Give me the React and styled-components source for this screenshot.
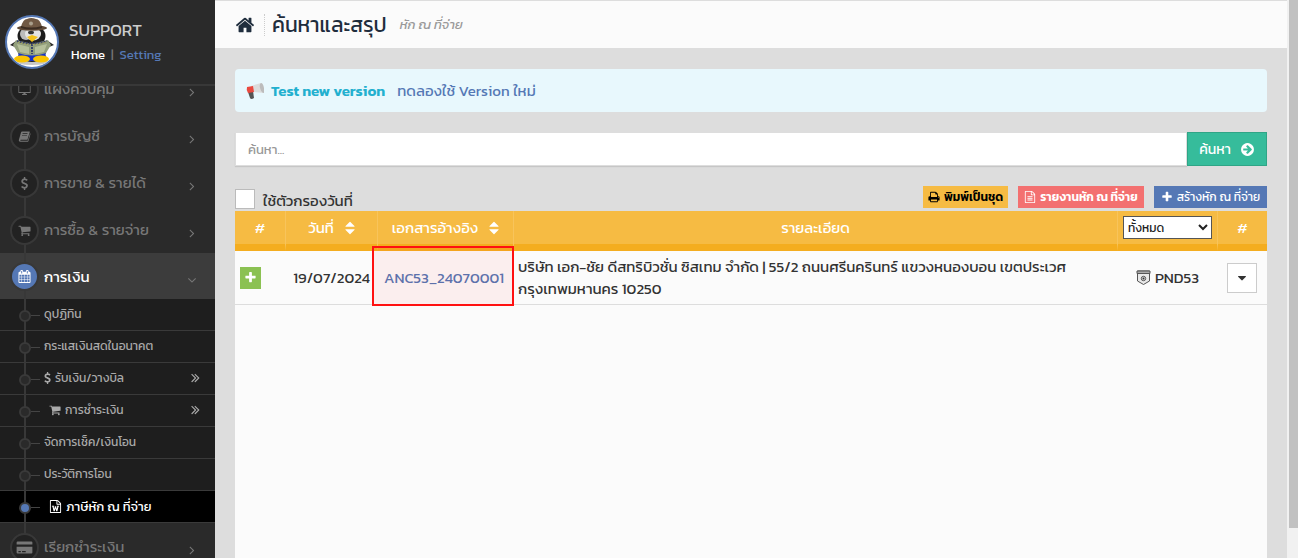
import React, { useState } from 'react'
import styled, { createGlobalStyle, css } from 'styled-components'

const GlobalStyle = createGlobalStyle`
  *, *::before, *::after {
    box-sizing: border-box;
  }
  body {
    margin: 0;
    overflow: hidden;
    background: #ddd;
    color: #333;
    font-family: Kanit, Prompt, "Noto Sans Thai", "Noto Sans", sans-serif;
    font-size: 15px;
    line-height: 22px;
  }
  button, input, select {
    font-family: inherit;
  }
  a {
    color: inherit;
    text-decoration: none;
  }
`

const ICONS = {
  home: 'M1472 992v480q0 26-19 45t-45 19h-384v-384h-256v384h-384q-26 0-45-19t-19-45v-480q0-1 .5-3t.5-3l575-474 575 474q1 2 1 6zm223-69l-62 74q-8 9-21 11h-3q-13 0-21-7l-692-577-692 577q-12 8-24 7-13-2-21-11l-62-74q-8-10-7-23.500t11-21.500l719-599q32-26 76-26t76 26l244 204v-195q0-14 9-23t23-9h192q14 0 23 9t9 23v408l219 182q10 8 11 21.500t-7 23.500z',
  plus: 'M1600 736v192q0 40-28 68t-68 28h-416v416q0 40-28 68t-68 28h-192q-40 0-68-28t-28-68v-416h-416q-40 0-68-28t-28-68v-192q0-40 28-68t68-28h416v-416q0-40 28-68t68-28h192q40 0 68 28t28 68v416h416q40 0 68 28t28 68z',
  right: 'M1171 960q0 13-10 23l-466 466q-10 10-23 10t-23-10l-50-50q-10-10-10-23t10-23l393-393-393-393q-10-10-10-23t10-23l50-50q10-10 23-10t23 10l466 466q10 10 10 23z',
  down: 'M1395 736q0 13-10 23l-466 466q-10 10-23 10t-23-10l-466-466q-10-10-10-23t10-23l50-50q10-10 23-10t23 10l393 393 393-393q10-10 23-10t23 10l50 50q10 10 10 23z',
  doubleRight: 'M979 960q0 13-10 23l-466 466q-10 10-23 10t-23-10l-50-50q-10-10-10-23t10-23l393-393-393-393q-10-10-10-23t10-23l50-50q10-10 23-10t23 10l466 466q10 10 10 23zm384 0q0 13-10 23l-466 466q-10 10-23 10t-23-10l-50-50q-10-10-10-23t10-23l393-393-393-393q-10-10-10-23t10-23l50-50q10-10 23-10t23 10l466 466q10 10 10 23z',
  cart: 'M704 1536q0 52-38 90t-90 38-90-38-38-90 38-90 90-38 90 38 38 90zm896 0q0 52-38 90t-90 38-90-38-38-90 38-90 90-38 90 38 38 90zm128-1088v512q0 24-16.500 42.500t-40.500 21.500l-1044 122q13 60 13 70 0 16-24 64h920q26 0 45 19t19 45-19 45-45 19h-1024q-26 0-45-19t-19-45q0-11 8-31.500t16-36 21.500-40 15.500-29.500l-177-823h-204q-26 0-45-19t-19-45 19-45 45-19h256q16 0 28.500 6.500t19.500 15.500 13 24.500 8 26 5.500 29.500 4.500 26h1201q26 0 45 19t19 45z',
  sort: 'M1408 1088q0 26-19 45l-448 448q-19 19-45 19t-45-19l-448-448q-19-19-19-45t19-45 45-19h896q26 0 45 19t19 45zm0-384q0 26-19 45t-45 19h-896q-26 0-45-19t-19-45 19-45l448-448q19-19 45-19t45 19l448 448q19 19 19 45z',
  caret: 'M1408 704q0 26-19 45l-448 448q-19 19-45 19t-45-19l-448-448q-19-19-19-45t19-45 45-19h896q26 0 45 19t19 45z',
  file: 'M1596 380q28 28 48 76t20 88v1152q0 40-28 68t-68 28h-1344q-40 0-68-28t-28-68v-1600q0-40 28-68t68-28h896q40 0 88 20t76 48zm-444-244v376h376q-10-29-22-41l-313-313q-12-12-41-22zm384 1528v-1024h-416q-40 0-68-28t-28-68v-416h-768v1536h1280zm-1024-864q0-14 9-23t23-9h704q14 0 23 9t9 23v64q0 14-9 23t-23 9h-704q-14 0-23-9t-9-23v-64zm736 224q14 0 23 9t9 23v64q0 14-9 23t-23 9h-704q-14 0-23-9t-9-23v-64q0-14 9-23t23-9h704zm0 256q14 0 23 9t9 23v64q0 14-9 23t-23 9h-704q-14 0-23-9t-9-23v-64q0-14 9-23t23-9h704z',
  word: 'M1596 380q28 28 48 76t20 88v1152q0 40-28 68t-68 28h-1344q-40 0-68-28t-28-68v-1600q0-40 28-68t68-28h896q40 0 88 20t76 48zm-444-244v376h376q-10-29-22-41l-313-313q-12-12-41-22zm384 1528v-1024h-416q-40 0-68-28t-28-68v-416h-768v1536h1280zM400 780h320v120h-75l70 350 110-400h140l110 400 70-350h-75v-120h320v120h-70l-165 640h-150l-110-380-110 380h-150l-165-640h-70z',
  print: 'M448 1536h896v-256h-896v256zm0-640h896v-384h-160q-40 0-68-28t-28-68v-160h-640v640zm1152 64q0-26-19-45t-45-19-45 19-19 45 19 45 45 19 45-19 19-45zm128 0v416q0 13-9.500 22.500t-22.500 9.500h-224v160q0 40-28 68t-68 28h-960q-40 0-68-28t-28-68v-160h-224q-13 0-22.500-9.500t-9.500-22.500v-416q0-79 56.500-135.500t135.500-56.500h64v-544q0-40 28-68t68-28h672q40 0 88 20t76 48l152 152q28 28 48 76t20 88v256h64q79 0 135.500 56.500t56.500 135.500z',
  calendar: 'M192 1664h288v-288h-288v288zm352 0h320v-288h-320v288zm-352-352h288v-320h-288v320zm352 0h320v-320h-320v320zm-352-384h288v-288h-288v288zm736 736h320v-288h-320v288zm-384-736h320v-288h-320v288zm768 736h288v-288h-288v288zm-384-352h320v-320h-320v320zm-352-864v-288q0-13-9.500-22.500t-22.500-9.500h-64q-13 0-22.500 9.500t-9.500 22.500v288q0 13 9.500 22.500t22.500 9.500h64q13 0 22.500-9.500t9.500-22.500zm736 864h288v-320h-288v320zm-384-384h320v-288h-320v288zm384 0h288v-288h-288v288zm32-480v-288q0-13-9.500-22.500t-22.500-9.500h-64q-13 0-22.500 9.500t-9.500 22.500v288q0 13 9.500 22.500t22.500 9.500h64q13 0 22.500-9.500t9.500-22.500zm384-64v1280q0 52-38 90t-90 38h-1408q-52 0-90-38t-38-90v-1280q0-52 38-90t90-38h128v-96q0-66 47-113t113-47h64q66 0 113 47t47 113v96h384v-96q0-66 47-113t113-47h64q66 0 113 47t47 113v96h128q52 0 90 38t38 90z',
  arrowCircle: 'M1413 896q0-27-18-45l-91-91-362-362q-18-18-45-18t-45 18l-91 91q-18 18-18 45t18 45l189 189h-502q-26 0-45 19t-19 45v128q0 26 19 45t45 19h502l-189 189q-19 19-19 45t19 45l91 91q18 18 45 18t45-18l362-362 91-91q18-18 18-45zm251 0q0 209-103 385.500t-279.500 279.500-385.500 103-385.500-103-279.500-279.500-103-385.500 103-385.500 279.500-279.500 385.500-103 385.500 103 279.500 279.500 103 385.500z',
  desktop: 'M96 256h1600q32 0 32 32v1050q0 32-32 32h-672l40 150h160v120h-656v-120h160l40-150h-672q-32 0-32-32v-1050q0-32 32-32zm64 120v870h1472v-870z',
  book: 'M560 190h1000q90 0 65 90l-300 1010q-20 70-90 70h-860q-60 0-80 55 0 65 110 65h890q60 0 80-55l290-960q75 40 50 120l-290 960q-25 75-110 75h-990q-180 0-215-165-10-60 15-120l290-990q30-130 145-155zm80 260l-25 85h680l25-85zm-75 240l-25 85h680l25-85z',
  card: 'M176 256h1440q112 0 112 112v220h-1664v-220q0-112 112-112zm-112 560h1664v608q0 112-112 112h-1440q-112 0-112-112v-608zm190 440v128h256v-128zm384 0v128h384v-128z',
  dollar: 'M1362 1185q0 153-99.500 263.500t-258.500 136.500v175q0 14-9 23t-23 9h-135q-13 0-22.500-9.500t-9.500-22.500v-175q-66-9-127.500-31t-101.500-44.500-74-48-46.500-37.500-17.500-18q-17-21-2-41l103-135q7-10 23-12 15-2 24 9l2 2q113 99 243 125 37 8 74 8 81 0 142.500-43t61.500-122q0-28-15-53t-33.500-42-58.500-37.500-66-32-80-32.500q-39-16-61.500-25t-61.500-26.500-62.500-31-56.500-35.500-53.500-42.500-43.500-49-35.500-58-21-66.500-8.500-78q0-138 98-242t255-134v-180q0-13 9.500-22.500t22.500-9.500h135q14 0 23 9t9 23v176q57 6 110.500 23t87 33.500 63.500 37.500 39 29 15 14q17 18 5 38l-81 146q-8 15-23 16-14 3-27-7-3-3-14.500-12t-39-26.500-58.500-32-74.500-26-85.500-11.500q-95 0-155 43t-60 111q0 26 8.500 48t29.500 41.500 39.500 33 56 31 60.500 27 70 27.500q53 20 81 31.500t76 35 75.500 42.500 62 50 53 63.500 31.500 76.500 13 94z',
}

const EVEN_ODD = ['desktop', 'book', 'card']

const Svg = styled.svg`
  flex: none;
  display: block;
  fill: currentColor;
`

// narrow glyphs are cropped to the middle of the grid
const Icon = ({ name, size = 14, narrow }) => (
  <Svg
    width={narrow ? Math.round(size * 0.57) : size}
    height={size}
    viewBox={narrow ? '384 0 1024 1792' : '0 0 1792 1792'}
    aria-hidden="true"
  >
    <path d={ICONS[name]} fillRule={EVEN_ODD.includes(name) ? 'evenodd' : 'nonzero'} />
  </Svg>
)

const Layout = styled.div`
  display: flex;
  height: 100vh;
`

const Sidebar = styled.aside`
  flex: none;
  display: flex;
  flex-direction: column;
  width: 215px;
  background: #2a2a2a;
  overflow: hidden;
`

const Profile = styled.div`
  flex: none;
  display: flex;
  align-items: center;
  gap: 10px;
  height: 86px;
  padding: 0 5px;
  border-bottom: 2px solid #383838;
`

const Avatar = styled.svg`
  flex: none;
  width: 54px;
  height: 54px;
  border: 2px solid #5578b5;
  border-radius: 50%;
  background: #fff;
`

const UserName = styled.div`
  color: #ccc;
  font-size: 17px;
  line-height: 26px;
`

const UserLinks = styled.div`
  display: flex;
  gap: 6px;
  padding-left: 2px;
  color: #777;
  font-size: 13px;
  line-height: 24px;
`

const UserLink = styled.a`
  color: ${({ $accent }) => ($accent ? '#5578b5' : '#fff')};
`

const Nav = styled.nav`
  flex: 1;
  min-height: 0;
  overflow: hidden;
`

const Menu = styled.ul`
  list-style: none;
  margin: 0;
  padding: 0;
`

// the list is scrolled down by half an item
const ScrolledMenu = styled(Menu)`
  margin-top: -21px;
`

const MenuItem = styled.li`
  position: relative;
  &::before {
    content: '';
    position: absolute;
    left: 24px;
    top: 0;
    bottom: 0;
    width: 2px;
    background: #383838;
  }
`

const MenuLink = styled.a`
  display: flex;
  align-items: center;
  gap: 5px;
  height: ${({ $active }) => ($active ? 46 : 47)}px;
  padding: 1px 16px 0 10px;
  color: ${({ $active }) => ($active ? '#fff' : '#777')};
  background: ${({ $active }) => ($active ? '#3c3c3c' : 'transparent')};
`

const Bullet = styled.span`
  position: relative;
  flex: none;
  display: flex;
  align-items: center;
  justify-content: center;
  width: 29px;
  height: 29px;
  border: 2px solid #383838;
  border-radius: 50%;
  background: ${({ $active }) => ($active ? '#5578b5' : '#222')};
`

const MenuLabel = styled.span`
  flex: 1;
  white-space: nowrap;
`

const Chevron = styled.span`
  padding-top: 6px;
  color: #777;
`

const SubLink = styled.a`
  position: relative;
  display: flex;
  align-items: center;
  gap: 4px;
  height: 32px;
  padding: 0 12px 2px ${({ $indent }) => ($indent ? 49 : 44)}px;
  border-bottom: 1px solid #3a3a3a;
  background: #1e1e1e;
  color: #aaa;
  font-size: 12px;
  &::before {
    content: '';
    position: absolute;
    left: 31px;
    top: 16px;
    width: 9px;
    height: 1px;
    background: #444;
  }
  ${({ $active }) => $active && css`
    padding-bottom: 0;
    background: #000;
    color: #fff;
    font-size: 13px;
  `}
`

const Dot = styled.span`
  position: absolute;
  left: 19px;
  top: 11px;
  width: 12px;
  height: 12px;
  border: 2px solid #3a3a3a;
  border-radius: 50%;
  background: ${({ $active }) => ($active ? '#5578b5' : '#2a2a2a')};
`

const SubItem = styled(MenuItem)`
  &::before {
    z-index: 1;
  }
  ${Dot} {
    z-index: 2;
  }
`

const Main = styled.main`
  flex: 1;
  min-width: 0;
  display: flex;
  flex-direction: column;
  border-top: 1px solid #ddd;
`

const PageHeader = styled.header`
  flex: none;
  display: flex;
  align-items: center;
  height: 47px;
  padding: 0 20px;
  background: #fbfbfb;
  color: #1f2d3d;
`

const PageTitle = styled.h1`
  margin: 0 13px 0 9px;
  padding-left: 7px;
  border-left: 1px dotted #ccc;
  font-size: 21px;
  font-weight: 400;
  line-height: 22px;
`

const Subtitle = styled.em`
  color: #999;
  font-size: 13px;
`

const Content = styled.div`
  flex: 1;
  min-height: 0;
  display: flex;
  flex-direction: column;
  padding: 21px 20px 0;
`

const Notice = styled.div`
  flex: none;
  display: flex;
  align-items: center;
  height: 43px;
  padding: 1px 11px 0;
  border-radius: 4px;
  background: #e8f8fd;
  color: #5578b5;
`

const NoticeTitle = styled.strong`
  margin: 0 12px 0 7px;
  color: #23b0cf;
  font-weight: 600;
`

const SearchForm = styled.form`
  flex: none;
  display: flex;
  height: 34px;
  margin: 20px 0;
`

const SearchInput = styled.input`
  flex: 1;
  min-width: 0;
  padding: 0 12px;
  border: 1px solid #ddd;
  background: #fff;
  box-shadow: 0 1px 1px rgba(0, 0, 0, 0.1);
  color: #333;
  font-size: 13px;
  &::placeholder {
    color: #999;
  }
`

const SearchButton = styled.button`
  display: flex;
  align-items: center;
  justify-content: center;
  gap: 9px;
  width: 80px;
  border: 1px solid #2fa586;
  background: #36bc9b;
  color: #fff;
  font-size: 14px;
`

const Toolbar = styled.div`
  flex: none;
  display: flex;
  justify-content: space-between;
  height: 25px;
`

const CheckLabel = styled.label`
  display: flex;
  gap: 8px;
  padding-top: 3px;
  line-height: 24px;
`

const CheckBox = styled.input`
  appearance: none;
  width: 20px;
  height: 20px;
  margin: 0;
  border: 1px solid #bbb;
  background: #fff;
  &:checked {
    background: #5578b5;
  }
`

const Actions = styled.div`
  display: flex;
  gap: 10px;
`

const ActionButton = styled.button`
  display: flex;
  align-items: center;
  justify-content: center;
  gap: 4px;
  min-width: ${({ $width }) => $width}px;
  height: 22px;
  padding: 0 4px;
  border: 0;
  background: ${({ $bg }) => $bg};
  color: ${({ $color }) => $color || '#fff'};
  font-size: 12px;
  font-weight: ${({ $bold }) => ($bold ? 600 : 400)};
  white-space: nowrap;
`

const Panel = styled.section`
  position: relative;
  flex: 1;
  background: #fbfbfb;
`

const Table = styled.table`
  width: 100%;
  border-collapse: separate;
  border-spacing: 0;
  table-layout: fixed;
`

const Th = styled.th`
  width: ${({ $width }) => ($width ? `${$width}px` : 'auto')};
  height: 40px;
  padding: 0;
  border-bottom: 7px solid #f4ad1f;
  border-right: 1px solid #f8c45b;
  background: #f6bb43;
  color: #fff;
  font-weight: 400;
  white-space: nowrap;
  &:last-child {
    border-right: 0;
  }
`

const SortButton = styled.button`
  display: inline-flex;
  align-items: center;
  gap: 8px;
  padding: 0 0 0 3px;
  border: 0;
  background: none;
  color: inherit;
  font-size: 15px;
`

const TypeSelect = styled.select`
  width: 89px;
  height: 23px;
  padding: 0;
  border: 1px solid #555;
  border-radius: 0;
  background: #fff;
  color: #222;
  font-size: 12px;
`

const Td = styled.td`
  position: relative;
  height: 54px;
  padding: 0 5px 0 4px;
  border-bottom: 1px solid #ddd;
  text-align: ${({ $align }) => $align || 'left'};
`

const ExpandCell = styled(Td)`
  padding-left: 5px;
`

const DateCell = styled(Td)`
  padding: 0 8px 0 0;
  white-space: nowrap;
`

const RefCell = styled(Td)`
  padding: 0 8px 0 4px;
`

const RefLink = styled.a`
  color: #5578b5;
`

// marks the document reference the reader has to click
const Highlight = styled.span`
  position: absolute;
  top: -5px;
  right: 0;
  bottom: -2px;
  left: -6px;
  border: 2px solid #f11;
  background: rgba(255, 0, 0, 0.05);
  pointer-events: none;
`

const ExpandButton = styled.button`
  display: flex;
  align-items: center;
  justify-content: center;
  width: 21px;
  height: 22px;
  padding: 0;
  border: 0;
  background: #8bc152;
  color: #fff;
`

const TypeTag = styled.span`
  display: inline-flex;
  align-items: center;
  gap: 4px;
  vertical-align: middle;
`

const MenuButton = styled.button`
  display: inline-flex;
  align-items: center;
  justify-content: center;
  width: 30px;
  height: 30px;
  padding: 0;
  border: 1px solid #ccc;
  background: #fff;
  color: #333;
  vertical-align: middle;
`

const ScrollTrack = styled.div`
  flex: none;
  width: 11px;
  padding-left: 2px;
  background: #f1f1f1;
`

const ScrollThumb = styled.div`
  height: 528px;
  background: #c1c1c1;
`

const topItems = [
  { label: 'แผงควบคุม', icon: 'desktop' },
  { label: 'การบัญชี', icon: 'book' },
  { label: 'การขาย & รายได้', icon: 'dollar' },
  { label: 'การซื้อ & รายจ่าย', icon: 'cart' },
  {
    label: 'การเงิน',
    icon: 'calendar',
    active: true,
    children: [
      { label: 'ดูปฏิทิน' },
      { label: 'กระแสเงินสดในอนาคต' },
      { label: 'รับเงิน/วางบิล', icon: 'dollar', more: true },
      { label: 'การชำระเงิน', icon: 'cart', indent: true, more: true },
      { label: 'จัดการเช็ค/เงินโอน' },
      { label: 'ประวัติการโอน' },
      { label: 'ภาษีหัก ณ ที่จ่าย', icon: 'word', indent: true, active: true },
    ],
  },
  { label: 'เรียกชำระเงิน', icon: 'card' },
]

const Penguin = () => (
  <Avatar viewBox="0 0 50 50" role="img" aria-label="SUPPORT">
    <ellipse cx="25" cy="45" rx="18" ry="3" fill="#c8c8c8" />
    <ellipse cx="24.500" cy="19" rx="14" ry="11" fill="#1c1c1c" />
    <path d="M9 24L3 28l5 2zM41 24l6 4-5 2z" fill="#282828" />
    <ellipse cx="25" cy="32" rx="14.500" ry="13" fill="#222" />
    <ellipse cx="19" cy="17" rx="6" ry="6" fill="#bbb" />
    <ellipse cx="26" cy="17" rx="8" ry="6.500" fill="#e4e4e4" />
    <path d="M12 35q13 6 26 0l2 9H10z" fill="#1735c8" />
    <path d="M9 23l16 4 16-4 3 5-5 8q-14 5-28 0l-5-8z" fill="#93a07c" />
    <path d="M10 27l12 3v7l-9-2zM28 30l12-3-3 8-9 2z" fill="#b5c09a" />
    <path d="M10 24q15 5 30 0M25 27v10" fill="none" stroke="#39456b" strokeWidth="2" strokeDasharray="2 1" />
    <path d="M11 25q14 5 28 0" fill="none" stroke="#dbc744" strokeWidth="1" strokeDasharray="1 2" />
    <path d="M20 20l5-2 6 2-6 5z" fill="#f4c21b" />
    <ellipse cx="24" cy="15.500" rx="3" ry="1.800" fill="#333" />
    <ellipse cx="25" cy="11" rx="15" ry="2.800" fill="#5e4937" />
    <path d="M14 10q2-8 6-8 4-2 9 0 4 0 6 8-10 3-21 0z" fill="#705944" />
    <path d="M14 9q10 3 21 0v2q-11 3-21 0z" fill="#3c2d22" />
    <circle cx="24" cy="6.500" r="2" fill="#aaa08c" />
    <ellipse cx="15" cy="42" rx="8" ry="3.500" fill="#fac400" />
    <ellipse cx="34" cy="42" rx="8" ry="3.500" fill="#fac400" />
  </Avatar>
)

const Megaphone = () => (
  <Svg width="18" height="18" viewBox="0 0 18 18" aria-hidden="true">
    <path d="M2 10l5-1 1 7q-3 2-4 0z" fill="#555" />
    <path d="M5 4l10-3 3 10-11-1z" fill="#dcdcdc" />
    <path d="M15 1q2 0 3 5t-1 5q-2-1-3-5t1-5z" fill="#bcbcbc" />
    <path d="M1 5l6-1 1 6-6 1q-2-3-1-6z" fill="#e9493f" />
  </Svg>
)

const Shield = () => (
  <Svg width="15" height="16" viewBox="0 0 15 16" aria-hidden="true">
    <path d="M1.500 1v10l6 3.500 6-3.500V1z" fill="#e8e8e8" stroke="#555" />
    <path d="M1 1h13v2.500H1z" fill="#aaa" stroke="#555" />
    <circle cx="7.500" cy="8.500" r="2.200" fill="#ddd" stroke="#555" />
    <circle cx="7.500" cy="8.500" r="1" fill="#333" />
  </Svg>
)

const SideMenu = () => (
  <Nav>
    <ScrolledMenu>
      {topItems.map(({ label, icon, active, children }) => (
        <MenuItem key={label}>
          <MenuLink href="#" $active={active}>
            <Bullet $active={active}>
              <Icon name={icon} size={icon === 'card' ? 17 : 13} />
            </Bullet>
            <MenuLabel>{label}</MenuLabel>
            <Chevron><Icon name={active ? 'down' : 'right'} /></Chevron>
          </MenuLink>
          {children && (
            <Menu>
              {children.map(sub => (
                <SubItem key={sub.label}>
                  <SubLink href="#" $active={sub.active} $indent={sub.indent}>
                    <Dot $active={sub.active} />
                    {sub.icon && (
                      <Icon name={sub.icon} size={sub.active ? 13 : 12} narrow={sub.icon === 'dollar'} />
                    )}
                    <MenuLabel>{sub.label}</MenuLabel>
                    {sub.more && <Icon name="doubleRight" size={15} />}
                  </SubLink>
                </SubItem>
              ))}
            </Menu>
          )}
        </MenuItem>
      ))}
    </ScrolledMenu>
  </Nav>
)

const DocumentTable = () => (
  <Table>
    <thead>
      <tr>
        <Th $width={51}>#</Th>
        <Th $width={92}><SortButton type="button">วันที่ <Icon name="sort" size={16} /></SortButton></Th>
        <Th $width={136}><SortButton type="button">เอกสารอ้างอิง <Icon name="sort" size={16} /></SortButton></Th>
        <Th>รายละเอียด</Th>
        <Th $width={100}>
          <TypeSelect aria-label="ประเภท" defaultValue="all">
            <option value="all">ทั้งหมด</option>
            <option value="53">PND53</option>
          </TypeSelect>
        </Th>
        <Th $width={49}>#</Th>
      </tr>
    </thead>
    <tbody>
      <tr>
        <ExpandCell><ExpandButton type="button" aria-label="ขยาย"><Icon name="plus" size={13} /></ExpandButton></ExpandCell>
        <DateCell $align="right">19/07/2024</DateCell>
        <RefCell $align="center">
          <RefLink href="#">ANC53_24070001</RefLink>
          <Highlight />
        </RefCell>
        <Td>บริษัท เอก-ชัย ดีสทริบิวชั่น ซิสเทม จำกัด | 55/2 ถนนศรีนครินทร์ แขวงหนองบอน เขตประเวศ<br />กรุงเทพมหานคร 10250</Td>
        <Td $align="center"><TypeTag><Shield /> PND53</TypeTag></Td>
        <Td $align="center"><MenuButton type="button" aria-label="เมนู"><Icon name="caret" size={14} /></MenuButton></Td>
      </tr>
    </tbody>
  </Table>
)

export default function App() {
  const [query, setQuery] = useState('')

  return (
    <Layout>
      <GlobalStyle />
      <Sidebar>
        <Profile>
          <Penguin />
          <div>
            <UserName>SUPPORT</UserName>
            <UserLinks>
              <UserLink href="#">Home</UserLink>|<UserLink href="#" $accent>Setting</UserLink>
            </UserLinks>
          </div>
        </Profile>
        <SideMenu />
      </Sidebar>
      <Main>
        <PageHeader>
          <Icon name="home" size={20} />
          <PageTitle>ค้นหาและสรุป</PageTitle>
          <Subtitle>หัก ณ ที่จ่าย</Subtitle>
        </PageHeader>
        <Content>
          <Notice>
            <Megaphone />
            <NoticeTitle>Test new version</NoticeTitle>
            <a href="#">ทดลองใช้ Version ใหม่</a>
          </Notice>
          <SearchForm onSubmit={e => e.preventDefault()}>
            <SearchInput
              aria-label="ค้นหา"
              placeholder="ค้นหา..."
              value={query}
              onChange={e => setQuery(e.target.value)}
            />
            <SearchButton type="submit">ค้นหา <Icon name="arrowCircle" size={15} /></SearchButton>
          </SearchForm>
          <Toolbar>
            <CheckLabel><CheckBox type="checkbox" /> ใช้ตัวกรองวันที่</CheckLabel>
            <Actions>
              <ActionButton $width={85} $bg="#f6bb43" $color="#000" $bold>
                <Icon name="print" size={12} />พิมพ์เป็นชุด
              </ActionButton>
              <ActionButton $width={126} $bg="#f37070" $bold>
                <Icon name="file" size={12} />รายงานหัก ณ ที่จ่าย
              </ActionButton>
              <ActionButton $width={113} $bg="#5578b5">
                <Icon name="plus" size={12} />สร้างหัก ณ ที่จ่าย
              </ActionButton>
            </Actions>
          </Toolbar>
          <Panel>
            <DocumentTable />
          </Panel>
        </Content>
      </Main>
      <ScrollTrack><ScrollThumb /></ScrollTrack>
    </Layout>
  )
}
